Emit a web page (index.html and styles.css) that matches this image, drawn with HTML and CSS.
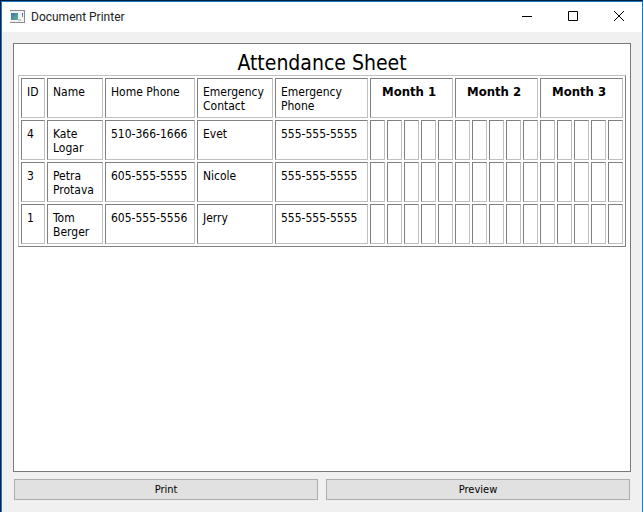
FILE: index.html
```html
<!DOCTYPE html>
<html lang="en">
<head>
<meta charset="utf-8">
<title>Document Printer</title>
<link rel="stylesheet" href="styles.css">
</head>
<body>
<div class="window">
  <header class="titlebar">
    <svg class="app-icon" width="16" height="14" viewBox="0 0 16 14" aria-hidden="true">
      <defs>
        <linearGradient id="pane" x1="0" y1="0" x2="1" y2="1">
          <stop offset="0" stop-color="#3f76a8"/>
          <stop offset="1" stop-color="#5fb587"/>
        </linearGradient>
      </defs>
      <rect x="0" y="0" width="15" height="1" fill="#8a8a8a"/>
      <rect x="14" y="0" width="1" height="13" fill="#8a8a8a"/>
      <rect x="0" y="1" width="14" height="11" fill="#f2f2f2"/>
      <rect x="0" y="12" width="15" height="1" fill="#8a8a8a"/>
      <rect x="1" y="3" width="7" height="7" fill="url(#pane)"/>
      <rect x="8" y="9" width="3" height="2" fill="#c9c9cf"/>
      <rect x="12" y="3" width="1" height="2" fill="#3c6cc0"/>
      <rect x="12" y="5" width="1" height="2" fill="#4da567"/>
    </svg>
    <h1 class="caption">Document Printer</h1>
    <button class="control" type="button" aria-label="Minimize">
      <svg width="10" height="10" viewBox="0 0 10 10"><path d="M0 5.5H10" stroke="#000"/></svg>
    </button>
    <button class="control" type="button" aria-label="Maximize">
      <svg width="10" height="10" viewBox="0 0 10 10"><path d="M.5 .5H9.500V9.500H.5Z" fill="none" stroke="#000"/></svg>
    </button>
    <button class="control" type="button" aria-label="Close">
      <svg width="10" height="10" viewBox="0 0 10 10"><path d="M0 0L10 10M10 0L0 10" stroke="#000"/></svg>
    </button>
  </header>
  <main class="content">
    <section class="page">
      <h2 class="title">Attendance Sheet</h2>
      <table class="sheet">
        <colgroup>
          <col class="col-id"><col class="col-name"><col class="col-home"><col class="col-contact"><col class="col-phone">
          <col span="15">
        </colgroup>
        <thead>
          <tr>
            <td>ID</td><td>Name</td><td>Home Phone</td><td>Emergency Contact</td><td>Emergency Phone</td>
            <th colspan="5">Month 1</th><th colspan="5">Month 2</th><th colspan="5">Month 3</th>
          </tr>
        </thead>
        <tbody>
          <tr>
            <td>4</td><td>Kate Logar</td><td>510-366-1666</td><td>Evet</td><td>555-555-5555</td>
            <td></td><td></td><td></td><td></td><td></td>
            <td></td><td></td><td></td><td></td><td></td>
            <td></td><td></td><td></td><td></td><td></td>
          </tr>
          <tr>
            <td>3</td><td>Petra Protava</td><td>605-555-5555</td><td>Nicole</td><td>555-555-5555</td>
            <td></td><td></td><td></td><td></td><td></td>
            <td></td><td></td><td></td><td></td><td></td>
            <td></td><td></td><td></td><td></td><td></td>
          </tr>
          <tr>
            <td>1</td><td>Tom Berger</td><td>605-555-5556</td><td>Jerry</td><td>555-555-5555</td>
            <td></td><td></td><td></td><td></td><td></td>
            <td></td><td></td><td></td><td></td><td></td>
            <td></td><td></td><td></td><td></td><td></td>
          </tr>
        </tbody>
      </table>
    </section>
    <div class="actions">
      <button class="action" type="button">Print</button>
      <button class="action" type="button">Preview</button>
    </div>
  </main>
</div>
</body>
</html>
```
FILE: styles.css
```css
* {
  box-sizing: border-box;
}

body {
  margin: 0;
  background: #041f3c;
  color: #000;
  font-family: Tahoma, "DejaVu Sans Condensed", "Noto Sans", sans-serif;
  font-size: 12px;
  line-height: 14px;
}

.window {
  display: flex;
  flex-direction: column;
  min-height: calc(100vh - 1px);
  margin: 1px 0 0 1px;
  border: 1px solid #1979ca;
  border-bottom: 0;
  background: #f0f0f0;
}

.titlebar {
  display: flex;
  align-items: center;
  height: 30px;
  padding-left: 8px;
  background: #fff;
}

.caption {
  flex: 1;
  margin: 0;
  padding-left: 5px;
  color: #222;
  font: 12px/16px "Segoe UI", Roboto, sans-serif;
}

.control {
  display: flex;
  align-items: center;
  justify-content: center;
  width: 46px;
  height: 30px;
  padding: 0 0 2px;
  border: 0;
  background: transparent;
}

.content {
  flex: 1;
  display: flex;
  flex-direction: column;
  gap: 7px;
  padding: 11px 11px 12px;
}

.page {
  flex: 1;
  padding: 4px;
  border: 1px solid #7a7a7a;
  background: #fff;
}

.title {
  margin: 0;
  padding-top: 3px;
  font-size: 21px;
  font-weight: 400;
  line-height: 24px;
  text-align: center;
}

.sheet {
  width: 100%;
  table-layout: fixed;
  border: 1px solid;
  border-color: #c0c0c0 #808080 #808080 #c0c0c0;
  border-collapse: separate;
  border-spacing: 2px;
}

.col-id { width: 24px; }
.col-name { width: 56px; }
.col-home { width: 90px; }
.col-contact { width: 76px; }
.col-phone { width: 93px; }

.sheet td,
.sheet th {
  height: 40px;
  padding: 6px 4px 4px 5px;
  border: 1px solid;
  border-color: #808080 #c0c0c0 #c0c0c0 #808080;
  text-align: left;
  vertical-align: top;
}

.sheet th {
  padding-left: 11px;
  font-size: 13px;
}

.actions {
  display: flex;
  gap: 8px;
  padding: 0 1px;
}

.action {
  flex: 1;
  height: 21px;
  padding: 0;
  border: 1px solid #adadad;
  background: #e1e1e1;
  color: #000;
  font-family: inherit;
  font-size: 11px;
  line-height: 14px;
}
```
